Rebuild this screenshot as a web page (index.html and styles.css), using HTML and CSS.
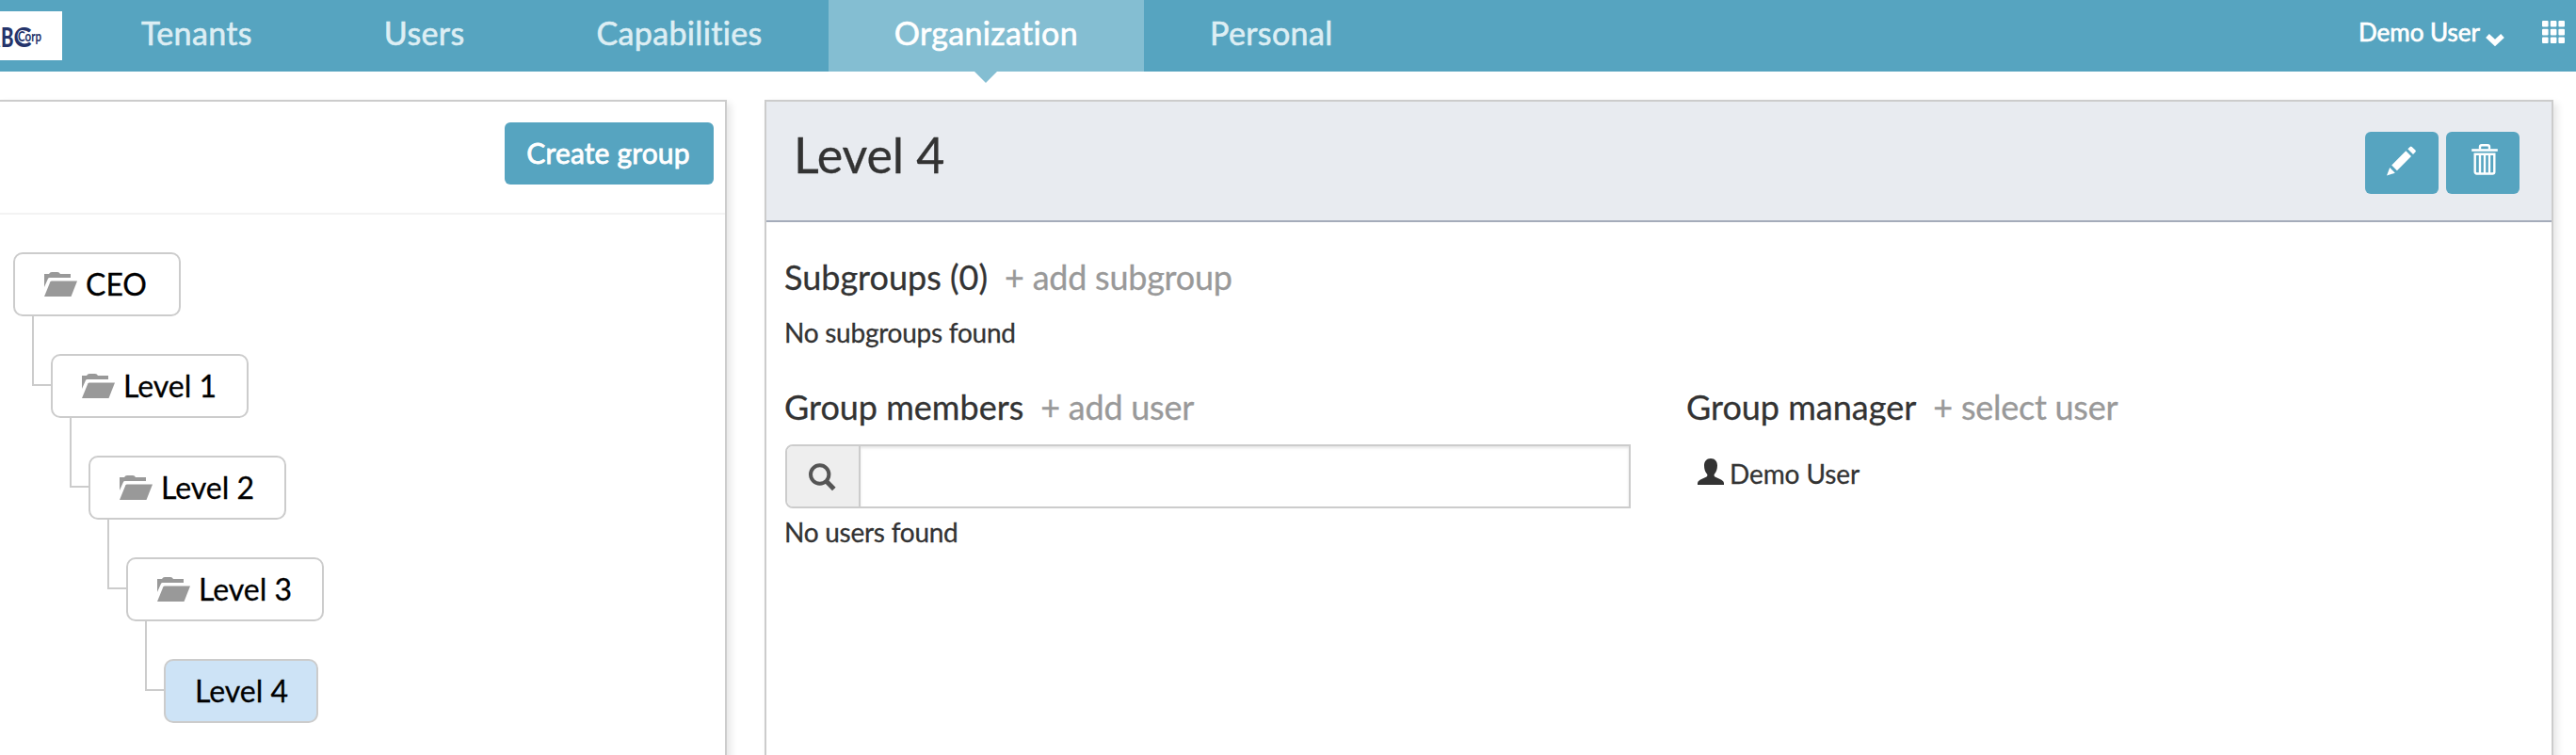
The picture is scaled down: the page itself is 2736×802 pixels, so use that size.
FILE: index.html
```html
<!DOCTYPE html>
<html lang="en">
<head>
<meta charset="utf-8">
<title>Organization</title>
<link rel="stylesheet" href="styles.css">
</head>
<body>
<header class="navbar">
  <div class="logo"><svg width="66" height="52" viewBox="0 0 66 52"><g fill="#25346b" font-family="Lato, sans-serif"><text y="37.500" font-size="29" font-weight="900"><tspan x="-15" textLength="15" lengthAdjust="spacingAndGlyphs">A</tspan><tspan x="1" textLength="13.500" lengthAdjust="spacingAndGlyphs">B</tspan><tspan x="14.500" textLength="19" lengthAdjust="spacingAndGlyphs">C</tspan></text><text x="19" y="32" font-size="15" font-weight="700" textLength="25" lengthAdjust="spacingAndGlyphs" stroke="#fff" stroke-width="2" paint-order="stroke">Corp</text></g></svg></div>
  <nav class="tabs">
    <a class="tab">Tenants</a>
    <a class="tab">Users</a>
    <a class="tab">Capabilities</a>
    <a class="tab active">Organization</a>
    <a class="tab">Personal</a>
  </nav>
  <div class="account"><span>Demo User</span>
    <svg class="chevron" width="20" height="14" viewBox="0 0 20 14"><path d="M2 3l8 7.500 8-7.500" fill="none" stroke="#fff" stroke-width="5.400"/></svg>
  </div>
  <svg class="grid" width="24" height="24" viewBox="0 0 24 24" fill="#fff"><rect width="6.600" height="6.600" rx="1"/><rect x="8.800" width="6.600" height="6.600" rx="1"/><rect x="17.400" width="6.600" height="6.600" rx="1"/><rect y="8.800" width="6.600" height="6.600" rx="1"/><rect x="8.800" y="8.800" width="6.600" height="6.600" rx="1"/><rect x="17.400" y="8.800" width="6.600" height="6.600" rx="1"/><rect y="17.400" width="6.600" height="6.600" rx="1"/><rect x="8.800" y="17.400" width="6.600" height="6.600" rx="1"/><rect x="17.400" y="17.400" width="6.600" height="6.600" rx="1"/></svg>
</header>
<svg class="defs" width="0" height="0"><symbol id="folder" viewBox="0 0 35 26"><path d="M0 2h5Q6 0 8 0h6q2 0 3 2h11v4H5.500Q4.500 6 4 7L0 16z"/><path d="M8 9.500h27L28.500 26H0L6.300 10.600Q6.800 9.500 8 9.500z"/></symbol></svg>
<main class="content">
  <section class="panel tree-panel">
    <div class="tree-head"><button class="btn create">Create group</button></div>
    <ul class="tree">
      <li><div class="node root"><svg class="folder"><use href="#folder"/></svg><span>CEO</span></div>
        <ul><li><div class="node"><svg class="folder"><use href="#folder"/></svg><span>Level 1</span></div>
          <ul><li><div class="node"><svg class="folder"><use href="#folder"/></svg><span>Level 2</span></div>
            <ul><li><div class="node"><svg class="folder"><use href="#folder"/></svg><span>Level 3</span></div>
              <ul><li><div class="node selected"><span>Level 4</span></div></li></ul>
            </li></ul>
          </li></ul>
        </li></ul>
      </li>
    </ul>
  </section>
  <section class="panel detail-panel">
    <div class="detail-head">
      <h1>Level 4</h1>
      <button class="btn icon-btn" aria-label="Edit"><svg width="32" height="32" viewBox="0 0 32 32" fill="#fff"><path d="M0 31.500L3.200 23l5.600 5.800zM5.200 20.400L20.300 5.200l5.700 5.700L10.900 26.200zM22.300 3.200L24.700.9q1-.9 2 0l3.700 3.700q.9 1 0 2L28 8.900z"/></svg></button>
      <button class="btn icon-btn trash" aria-label="Delete"><svg width="28" height="33" viewBox="0 0 28 33" fill="none" stroke="#fff"><path d="M9 5.500V3q0-1.800 1.800-1.800h6.400Q19 1.200 19 3v2.500" stroke-width="2.400"/><path d="M.2 6.500h27.600" stroke-width="2.600"/><path d="M3.700 10.700h20.600v18.800q0 2-2 2H5.700q-2 0-2-2z" stroke-width="2.400"/><path d="M9 11v20M14 11v20M19 11v20" stroke-width="2.400"/></svg></button>
    </div>
    <div class="detail-body">
      <h2><span>Subgroups (0)</span><a>+ add subgroup</a></h2>
      <p>No subgroups found</p>
      <div class="columns">
        <div class="members">
          <h2><span>Group members</span><a>+ add user</a></h2>
          <div class="search"><div class="addon"><svg width="29" height="30" viewBox="0 0 29 30" fill="none" stroke="#555"><circle cx="11.700" cy="12" r="9.700" stroke-width="4"/><path d="M18.500 19l8.300 8.600" stroke-width="5"/></svg></div><input type="text" aria-label="Search users"></div>
          <p>No users found</p>
        </div>
        <div class="manager">
          <h2><span>Group manager</span><a>+ select user</a></h2>
          <div class="user"><svg width="28" height="28" viewBox="0 0 28 28" fill="#333"><path d="M14 0c4.600 0 7 3.200 7 7.500 0 4-1.200 7-3 9-.6.800-.6 2.500.5 3l6.500 3q3 1.500 3 3.500v2H0v-2q0-2 3-3.500l6.500-3c1.100-.5 1.100-2.200.5-3-1.800-2-3-5-3-9C7 3.200 9.400 0 14 0z"/></svg><span>Demo User</span></div>
        </div>
      </div>
    </div>
  </section>
</main>
</body>
</html>
```
FILE: styles.css
```css
* { box-sizing: border-box; }
body { margin: 0; height: 802px; overflow: hidden; background: #fff; color: #333; font-family: Lato, sans-serif; font-size: 28px; font-variant-ligatures: none; -webkit-text-stroke: 0.3px; }
.defs { display: block; height: 0; }
.navbar { display: flex; height: 76px; background: #56a4c0; color: #fff; }
.logo { width: 66px; height: 52px; margin: 12px 14px 0 0; background: #fff; overflow: hidden; -webkit-text-stroke: 0; }
.logo svg { display: block; }
.tabs { display: flex; }
.tab { padding: 0 70px; font-size: 34px; line-height: 70px; letter-spacing: 0.35px; color: #ddeef4; white-space: nowrap; -webkit-text-stroke: 0.6px; }
.tab.active { position: relative; background: #84bed2; color: #fff; }
.tab.active::after { content: ""; position: absolute; top: 76px; left: 50%; margin-left: -12px; border: 12px solid transparent; border-top-color: #84bed2; border-bottom: 0; }
.account { display: flex; margin-left: auto; font-size: 26px; line-height: 68px; white-space: nowrap; -webkit-text-stroke: 0.7px; }
.chevron { margin: 35px 0 0 6px; }
.grid { margin: 22px 12px 0 40px; }
.content { display: flex; gap: 40px; padding-top: 30px; }
.panel { height: 720px; border: 2px solid #ccc; background: #fff; box-shadow: 4px 4px 8px rgba(0,0,0,.1); }
.tree-panel { width: 772px; border-left: 0; }
.detail-panel { width: 1900px; }
.tree-head { display: flex; justify-content: flex-end; height: 120px; padding: 22px 12px 0 0; border-bottom: 2px solid #f3f3f3; }
.btn { border: 0; border-radius: 6px; background: #56a4c0; color: #fff; font-family: inherit; padding: 0; }
.create { width: 222px; height: 66px; padding: 0 2px 2px 0; font-size: 30px; letter-spacing: 0.15px; font-variant-ligatures: none; -webkit-text-stroke: 0.8px; }
.tree, .tree ul { list-style: none; margin: 0; padding: 0; }
.tree { padding: 40px 0 0 14px; }
.tree ul { padding: 40px 0 0 40px; }
.tree li { position: relative; }
.tree ul > li::before { content: ""; position: absolute; left: -20px; top: -40px; width: 20px; height: 72px; border: solid #ccc; border-width: 0 0 2px 2px; }
.node { display: inline-flex; vertical-align: top; align-items: center; height: 68px; padding: 0 31px; gap: 9px; border: 2px solid #ccc; border-radius: 10px; color: #000; font-size: 32px; line-height: 64px; white-space: nowrap; }
.node:not(.selected) { min-width: 210px; }
.node.root { min-width: 178px; }
.node.selected { width: 164px; background: #cde3f6; }
.folder { width: 35px; height: 26px; fill: #999; }
.detail-head { display: flex; height: 128px; padding: 32px 34px 0 29px; gap: 8px; background: #e8ebf0; border-bottom: 2px solid #a5acba; }
h1 { margin: 0 auto 0 0; font-size: 52px; font-weight: 400; line-height: 48px; letter-spacing: -0.1px; }
.icon-btn { width: 78px; height: 66px; }
.icon-btn svg { display: block; margin: -4px auto 0; }
.trash { padding: 0 0 3px 4px; }
.detail-body { padding: 38px 20px 0 19px; }
h2 { display: flex; gap: 18px; margin: 0; font-size: 36px; font-weight: 400; line-height: 40px; white-space: nowrap; }
h2 a { color: #999; letter-spacing: -0.25px; }
p { margin: 0; line-height: 40px; letter-spacing: -0.25px; }
.detail-body > p { margin-top: 19px; }
.columns { display: flex; margin-top: 39px; }
.members { width: 899px; margin-right: 59px; }
.search { display: flex; height: 68px; margin: 20px 0 5px 1px; border: 2px solid #ccc; border-radius: 8px 0 0 8px; }
.addon { width: 78px; border-right: 2px solid #ccc; background: #eee; border-radius: 6px 0 0 6px; }
.addon svg { display: block; margin: 18px 0 0 23px; }
.search input { flex: 1; border: 0; padding: 0; box-shadow: inset 0 2px 3px rgba(0,0,0,.1); }
.user { display: flex; align-items: flex-start; gap: 6px; margin: 35px 0 0 12px; line-height: 32px; letter-spacing: -0.1px; }
.node.root + ul { margin: 0; }
```
